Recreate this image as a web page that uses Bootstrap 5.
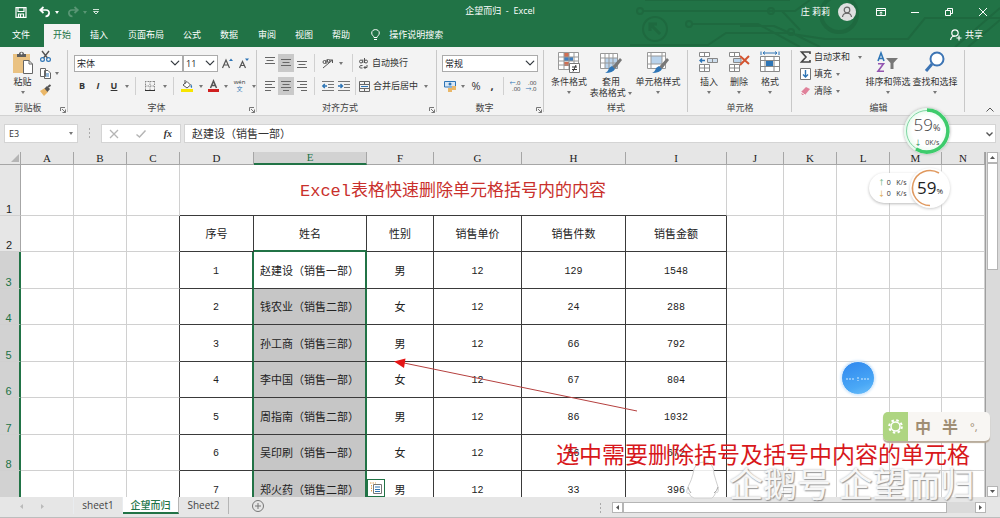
<!DOCTYPE html>
<html lang="zh-CN">
<head>
<meta charset="utf-8">
<meta name="viewport" content="width=device-width, initial-scale=1">
<title>企望而归 - Excel</title>
<link href="https://cdn.jsdelivr.net/npm/bootstrap@5.3.0/dist/css/bootstrap.min.css" rel="stylesheet">
<style>
  :root { --xl-green:#217346; --xl-ribbon:#f3f3f3; --xl-chrome:#e6e6e6; --xl-line:#d0d0d0; --ink:#333; }
  body { font-family:"Open Sans","Noto Sans CJK SC",sans-serif; font-size:9px; line-height:12px; color:var(--ink); background:var(--xl-chrome); }
  button, input, select { font:inherit; color:inherit; }
  svg { display:block; flex:none; overflow:visible; }
  .btn { --bs-btn-padding-x:0; --bs-btn-padding-y:0; --bs-btn-font-size:9px; --bs-btn-line-height:12px; --bs-btn-border-width:0; --bs-btn-border-radius:0; --bs-btn-color:#333; white-space:nowrap; }

  /* title bar and ribbon tabs */
  .app-head { background:var(--xl-green); color:#fff; }
  .app-head .btn { --bs-btn-color:#fff; }
  .circuit { position:absolute; right:0; top:0; overflow:hidden; }
  .title-bar { height:24px; padding-left:15px; }
  .doc-title { left:0; right:0; top:5px; }
  .tab-strip { height:23px; }
  .tab-strip .nav-link { color:#fff; font-size:9px; line-height:20px; padding:1px 9px 2px; border-radius:0; }
  .tab-strip .nav-link.active { background:var(--xl-ribbon); color:var(--xl-green); }

  /* ribbon */
  .ribbon { background:var(--xl-ribbon); height:69px; border-bottom:1px solid #d2d2d2; }
  .rgroup { flex:none; position:relative; padding-top:4px; }
  .rgroup::after { content:""; position:absolute; right:0; top:3px; bottom:3px; width:1px; background:#c8c8c8; }
  .rgroup-name { position:absolute; left:0; right:0; bottom:1px; text-align:center; color:#444; }
  .rgroup-more { position:absolute; right:2px; bottom:2px; }
  .trow { display:grid; align-items:center; justify-items:center; height:24px; }
  .trow + .trow { height:22px; }
  .caret { width:0; height:0; border:2px solid transparent; border-top:3px solid #777; border-bottom:0; }
  .vsep { width:1px; height:18px; background:#d0d0d0; }
  .pressed { background:#c9c9c9 !important; }
  .tool { width:16px; height:18px; display:flex; align-items:center; justify-content:center; }
  .form-select.xl { height:17px; padding:0 12px 0 2px; font-size:9px; line-height:15px; border:1px solid #ababab; border-radius:0; background-color:#fff; background-size:10px 10px; background-position:right 2px center; width:100%; }
  .big { display:flex; flex-direction:column; align-items:center; }
  .big span { margin-top:2px; line-height:11px; text-align:center; }
  .big .caret { margin-top:4px; }

  /* formula bar */
  .fbar { height:36px; padding:8px 4px 9px; }
  .fbox { background:#fff; border:1px solid #d4d4d4; height:19px; display:flex; align-items:center; }
  .fbox input { border:0; outline:0; background:transparent; min-width:0; width:100%; padding:0; }

  /* sheet */
  .sheet { flex:1 1 0; min-height:0; }
  .grid-wrap { overflow:hidden; background:#fff; min-width:0; border-right:1px solid #9f9f9f; }
  .cells { table-layout:fixed; width:100%; border-collapse:separate; border-spacing:0; font-family:"Liberation Mono","Noto Sans CJK SC",monospace; font-size:11px; line-height:12px; color:#222; }
  .cells td, .cells th { padding:0; border-right:1px solid var(--xl-line); border-bottom:1px solid var(--xl-line); text-align:center; vertical-align:middle; overflow:hidden; white-space:nowrap; font-weight:400; }
  .cells tbody td { padding-top:3px; }
  .cells thead th { height:13px; line-height:12px; font-family:"Liberation Serif",serif; font-weight:400; background:var(--xl-chrome); border-color:#a6a6a6; }
  .cells thead th.on { background:#d2d2d2; color:var(--xl-green); border-bottom:2px solid var(--xl-green); line-height:11px; }
  .cells tbody th { vertical-align:bottom; background:var(--xl-chrome); border-right-color:#a6a6a6; padding-right:2px; font-family:"Liberation Sans",sans-serif; font-size:11px; }
  .cells tbody tr:nth-child(even) { height:36px; }
  .cells tbody tr:nth-child(odd) { height:37px; }
  .cells tbody tr:first-child { height:51px; }
  .cells tbody tr.hit th { background:#d2d2d2; color:var(--xl-green); border-right:2px solid var(--xl-green); }
  .cells td.k { border-color:#3a3a3a; }
  .cells td.edge { border-right-color:#3a3a3a; }
  .cells td.num { font-size:10px; }
  .cells td.head-line { border-bottom-color:#3a3a3a; color:#c9302c; font-size:17px; line-height:22px; }
  .cells .hit td.pre, .cells .hit td.sel { border-right:2px solid var(--xl-green); }
  .cells td.sel { text-align:left; padding-left:6px; }
  .cells .hit ~ .hit td.sel { background:#c6c6c6; }
  .cells td.sel-top { border-bottom:2px solid var(--xl-green); }
  .vbar { width:14px; flex:none; background:#dadada; padding:0 2px 0 1px; display:flex; flex-direction:column; }
  .sbtn { background:#fff; border:1px solid #b5b5b5; display:flex; align-items:center; justify-content:center; height:11px; width:11px; flex:none; padding:0; }
  .thumb { background:#fff; border:1px solid #b5b5b5; }

  /* sheet tabs */
  .foot { height:21px; padding-bottom:3px; border-bottom:1px solid #bdbdbd; font-size:10px; }
  .foot .nav-link { font-size:10px; line-height:16px; padding:0; text-align:center; color:#444; border-radius:0; border-right:1px solid #b5b5b5; }
  .foot .nav-link.active { background:#fff; color:var(--xl-green); border-bottom:2px solid var(--xl-green); border-right-color:#b5b5b5; font-size:10px; font-weight:500; }

  /* floating things over the sheet */
  .float { position:absolute; z-index:5; }
  .note { left:556px; top:440px; font-size:23px; line-height:28px; color:#d8171b; white-space:nowrap; }
  .wmark { left:729px; top:461px; font-size:34px; line-height:44px; color:#f6f6f6; white-space:nowrap; text-shadow:1px 1px 1px #888, 0 0 2px #aaa; opacity:.85; z-index:4; font-family:"Noto Sans CJK SC",sans-serif; font-weight:400; }
  .ball { right:50px; top:108px; width:46px; height:46px; border-radius:50%; background:radial-gradient(circle,#fff 45%,#c3f2d2 100%); box-shadow:0 0 3px #aaa; color:#444; }
  .pill { right:58px; top:173px; width:73px; height:30px; border-radius:15px; background:#fff; box-shadow:0 1px 3px #bbb; padding:4px 0 0 9px; font-size:7px; line-height:11px; }
  .dial { right:50px; top:168px; width:40px; height:40px; border-radius:50%; background:#fff; box-shadow:0 1px 3px #ccc; color:#222; }
  .bubble { left:841px; top:361px; width:34px; height:34px; border-radius:50%; border:1px solid #d8ebfd; background:linear-gradient(160deg,#2f87ee,#4aa8f6 70%,#6fc0fa); box-shadow:0 0 3px #b5d8f8; }
  .ime { right:10px; top:412px; width:107px; height:29px; border-radius:5px; background:#f8f6f3; box-shadow:0 2px 1px #b8ac9c; overflow:hidden; color:#a08e74; font-size:16px; line-height:20px; font-weight:700; }
  .ime-logo { width:25px; background:#aed581; }
  .paste-opt { left:367px; top:479px; width:18px; height:18px; background:#fff; border:1px solid var(--xl-green); padding:2px; }
</style>
</head>
<body>
<div class="vh-100 d-flex flex-column position-relative overflow-hidden">

  <header class="app-head position-relative">
    <svg class="circuit" width="500" height="47" fill="none" stroke="#1e693f" stroke-width="2">
      <path d="M145 0H290M143 11H295L310 0M192 24H258L300 47M130 45H208L226 33H292L320 47M240 26H274L292 34L325 39H408L425 18H500M240 11H282L300 30M455 47L500 8M468 47L500 20"/>
      <circle cx="140" cy="11" r="3"/><circle cx="189" cy="24" r="3"/><circle cx="271" cy="11" r="3"/><circle cx="291" cy="32" r="3"/>
      <circle cx="155" cy="29" r="12"/><path d="M160 34L150 24M150 31V24H157" stroke-width="3"/>
      <circle cx="339" cy="14" r="18" stroke-width="4"/>
    </svg>
    <div class="title-bar d-flex align-items-center position-relative">
      <div class="d-flex align-items-center">
        <button class="btn" aria-label="保存"><svg width="12" height="11" fill="none" stroke="#fff" stroke-width="1.2"><path d="M1 .6H11V10.4H1ZM3 .6V4.5H9V.6M3.5 10.4V7H8.500V10.4M5.500 7.500V10"/></svg></button>
        <button class="btn d-flex align-items-center ms-2 ps-1" aria-label="撤消"><svg width="12" height="12" fill="none" stroke="#fff" stroke-width="1.700"><path d="M4.500 1L1.200 4L4.500 7M1.500 4H7C11.500 4 11 10 6.500 10.500"/></svg><i class="caret ms-1" style="border-top-color:#fff"></i></button>
        <button class="btn d-flex align-items-center ms-2 opacity-25" aria-label="恢复"><svg width="12" height="12" fill="none" stroke="#fff" stroke-width="1.700"><path d="M7.500 1L10.800 4L7.500 7M10.500 4H5C.500 4 1 10 5.500 10.500"/></svg><i class="caret ms-1" style="border-top-color:#fff"></i></button>
        <button class="btn ps-1" style="margin-left:2px" aria-label="自定义快速访问工具栏"><svg width="6" height="6" fill="none" stroke="#cfe3d7"><path d="M0 .5H6M.5 2.500H5.500L3 5Z"/></svg></button>
      </div>
      <div class="doc-title position-absolute text-center">企望而归&nbsp; - &nbsp;Excel</div>
      <div class="ms-auto d-flex align-items-center position-relative">
        <span>庄 莉莉</span>
        <svg class="ms-2" width="18" height="18"><circle cx="9" cy="9" r="9" fill="#dfe0e0"/><g fill="none" stroke="#666" stroke-width="1.200"><circle cx="9" cy="7" r="2.800"/><path d="M4.500 14C5 9 13 9 13.500 14"/></g></svg>
        <button class="btn" style="margin-left:20px" aria-label="功能区显示选项"><svg width="10" height="8" fill="none" stroke="#fff"><path d="M.5 .5H9.500V7.500H.5ZM.5 2.500H9.500M5 7V4M3.500 5.300L5 3.800L6.500 5.300"/></svg></button>
        <button class="btn" style="margin-left:25px" aria-label="最小化"><svg width="8" height="8" stroke="#fff"><path d="M0 4.500H8"/></svg></button>
        <button class="btn" style="margin-left:26px" aria-label="向下还原"><svg width="8" height="8" fill="none" stroke="#fff"><path d="M.5 2.500H5.500V7.500H.5ZM2.500 2.500V.5H7.500V5.500H5.500"/></svg></button>
        <button class="btn" style="margin:0 13px 0 26px" aria-label="关闭"><svg width="8" height="8" stroke="#fff"><path d="M0 0L8 8M8 0L0 8"/></svg></button>
      </div>
    </div>
    <nav class="tab-strip d-flex position-relative">
      <div class="nav flex-nowrap">
        <a class="nav-link" style="width:44px;padding-left:12px" href="#">文件</a>
        <a class="nav-link active" href="#">开始</a>
        <a class="nav-link" style="padding-left:10px" href="#">插入</a>
        <a class="nav-link ms-1" style="padding-left:7px" href="#">页面布局</a>
        <a class="nav-link ms-1" style="padding-left:6px" href="#">公式</a>
        <a class="nav-link ms-1" style="padding-left:6px" href="#">数据</a>
        <a class="nav-link ms-1" style="padding-left:7px" href="#">审阅</a>
        <a class="nav-link ms-1" style="padding-left:6px" href="#">视图</a>
        <a class="nav-link ms-1" style="padding-left:6px" href="#">帮助</a>
        <a class="nav-link d-flex align-items-center" style="padding-left:12px" href="#"><svg width="9" height="12" fill="none" stroke="#fff"><path d="M3 8.500C3 7 .7 6.500 .7 4C.7 -.5 8.300 -.5 8.300 4C8.300 6.500 6 7 6 8.500ZM3 10.500H6"/></svg><span style="margin-left:9px">操作说明搜索</span></a>
      </div>
      <a class="nav-link d-flex align-items-center ms-auto" style="padding-right:17px" href="#"><svg width="11" height="12" fill="none" stroke="#fff" stroke-width="1.200"><circle cx="5" cy="4" r="3.200"/><path d="M.6 11C1 8 3 7 5 7M9 6.500V11.500M6.500 9H11.500"/></svg><span class="ms-1">共享</span></a>
    </nav>
  </header>

  <section class="ribbon d-flex" aria-label="功能区">
    <div class="rgroup" style="width:68px">
      <div class="d-flex">
        <button class="btn big" style="margin-left:12px;width:21px">
          <svg width="22" height="23"><path d="M1 3H18V22H1Z" fill="#eac282"/><path d="M5 6V3H7C7 0 12 0 12 3H14V6Z" fill="#5d5d5d"/><circle cx="9.500" cy="2.500" r="1" fill="#fff"/><path d="M11.500 9.500H17L20.500 13V22.500H11.500Z" fill="#fff" stroke="#666"/><path d="M17 9.500V13H20.500" fill="none" stroke="#666"/></svg>
          <span style="margin-top:2px">粘贴</span><i class="caret"></i></button>
        <div class="d-flex flex-column" style="margin-left:7px;gap:6px">
          <button class="btn" aria-label="剪切"><svg width="11" height="11" fill="none" stroke="#555" stroke-width="1.400"><path d="M2 0L7.500 7M9 0L3.500 7"/><g stroke="#2e75b6" stroke-width="1.200"><circle cx="2.500" cy="8.500" r="1.900"/><circle cx="8.500" cy="8.500" r="1.900"/></g></svg></button>
          <button class="btn d-flex align-items-center" aria-label="复制"><svg width="11" height="11" fill="#fff" stroke="#666"><path d="M.5 .5H5.500V8.500H.5ZM4.500 2.500H8L10.500 5V10.500H4.500Z"/><path d="M6 6H9M6 8H9" stroke="#2e75b6"/></svg><i class="caret ms-1"></i></button>
          <button class="btn" aria-label="格式刷"><svg width="11" height="11"><path d="M0 6L5 3L8 7L4 11Z" fill="#eab768"/><path d="M4.500 3.500L7 1L10 4L7.500 7Z" fill="#555"/><path d="M8 2L10.500 0" stroke="#555" stroke-width="2"/></svg></button>
        </div>
      </div>
      <div class="rgroup-name" style="right:12px">剪贴板</div><svg class="rgroup-more" width="6" height="6" fill="none" stroke="#777"><path d="M.5 4V.5H5M2 2L5.500 5.500M5.500 2.500V5.500H2.500"/></svg>
    </div>

    <div class="rgroup" style="width:189px">
      <div class="trow" style="grid-template-columns:109px 35px 18px 16px;padding-left:6px">
        <select class="form-select xl" aria-label="字体"><option>宋体</option></select>
        <select class="form-select xl" aria-label="字号"><option>11</option></select>
        <button class="btn" aria-label="增大字号"><svg width="11" height="11" fill="none" stroke="#555" stroke-width="1.200"><path d="M.5 10L4 2L7.500 10M2 7H6"/><path d="M7 3L9 .500L11 3Z" fill="#2e75b6" stroke="none"/></svg></button>
        <button class="btn" aria-label="减小字号"><svg width="10" height="11" fill="none" stroke="#555" stroke-width="1.200"><path d="M.5 10L3.500 3.500L6.500 10M2 7.500H5"/><path d="M6 .500L8 3L10 .500Z" fill="#2e75b6" stroke="none"/></svg></button>
      </div>
      <div class="trow" style="grid-template-columns:16px 16px 16px 9px 9px 20px 9px 8px 19px 9px 16px 9px 19px 9px;padding-left:6px">
        <button class="btn fw-bold">B</button><button class="btn fst-italic fw-bold">I</button><button class="btn text-decoration-underline fw-bold">U</button><i class="caret"></i><i class="vsep"></i>
        <button class="btn" aria-label="边框"><svg width="10" height="10" fill="none" stroke="#888"><path d="M.5 0V10M5 0V10M9.500 0V10M0 .5H10M0 5H10" stroke-dasharray="1.500 1"/><path d="M0 9.500H10" stroke="#333"/></svg></button><i class="caret"></i><i class="vsep"></i>
        <button class="btn" aria-label="填充颜色"><svg width="12" height="12"><path d="M2 5L6 1.500L9.500 5L6 8Z" fill="#fff" stroke="#555"/><path d="M4 4V0" stroke="#555"/><path d="M10 4Q12 7 10.500 8Q9 7 10 4" fill="#2e75b6"/><path d="M0 9H12V12H0Z" fill="#f7e500"/></svg></button><i class="caret"></i>
        <button class="btn" aria-label="字体颜色"><svg width="11" height="12"><path d="M2.500 8L5.500 1L8.500 8M3.500 5.500H7.500" fill="none" stroke="#555" stroke-width="1.500"/><path d="M0 9H11V12H0Z" fill="#d01f1f"/></svg></button><i class="caret"></i>
        <button class="btn d-flex flex-column align-items-center" style="font-size:6px;line-height:7px"><span>wén</span><span style="color:#2e75b6">文</span></button><i class="caret"></i>
      </div>
      <div class="rgroup-name" style="right:12px">字体</div><svg class="rgroup-more" width="6" height="6" fill="none" stroke="#777"><path d="M.5 4V.5H5M2 2L5.500 5.500M5.500 2.500V5.500H2.500"/></svg>
    </div>

    <div class="rgroup" style="width:180px">
      <div class="trow" style="grid-template-columns:16px 16px 16px 9px 17px 9px 14px auto;padding-left:5px">
        <button class="btn tool" aria-label="顶端对齐"><svg width="10" height="10" stroke="#666"><path d="M0 1.500H10M1.500 4.500H8.500M0 7.500H10" transform="translate(0 -2)"/></svg></button>
        <button class="btn tool pressed" aria-label="垂直居中"><svg width="10" height="10" stroke="#666"><path d="M0 1.500H10M1.500 4.500H8.500M0 7.500H10"/></svg></button>
        <button class="btn tool" aria-label="底端对齐"><svg width="10" height="10" stroke="#666"><path d="M0 3.500H10M1.500 6.500H8.500M0 9.500H10"/></svg></button>
        <i class="vsep"></i>
        <button class="btn" aria-label="方向"><svg width="11" height="11" fill="none" stroke="#555"><path d="M1 10L10.500 2M10.500 5V2H7.500"/><circle cx="2.500" cy="4" r="1.500"/><path d="M4 2V6M5 1L6 4"/><circle cx="6.500" cy="3" r="1.500"/></svg></button><i class="caret"></i><i class="vsep"></i>
        <button class="btn d-flex align-items-center" style="justify-self:start"><svg width="9" height="11" fill="none" stroke="#555"><circle cx="2" cy="3.500" r="1.500"/><path d="M3.800 1.500V5M5.500 0V5"/><circle cx="7" cy="3.500" r="1.500"/><path d="M3.500 7.500Q.5 7 .5 9Q.5 10.500 3.500 10M8 7V9.500H5M6.500 8L5 9.500L6.500 11"/></svg><span class="ms-1">自动换行</span></button>
      </div>
      <div class="trow" style="grid-template-columns:16px 16px 16px 9px 17px 15px 8px auto 16px 9px;justify-content:start;padding-left:5px">
        <button class="btn tool" aria-label="左对齐"><svg width="10" height="10" stroke="#666"><path d="M0 .5H10M0 3.500H7M0 6.500H10M0 9.500H6"/></svg></button>
        <button class="btn tool pressed" aria-label="居中"><svg width="10" height="10" stroke="#666"><path d="M0 .5H10M1.500 3.500H8.500M0 6.500H10M2 9.500H8"/></svg></button>
        <button class="btn tool" aria-label="右对齐"><svg width="10" height="10" stroke="#666"><path d="M0 .5H10M3 3.500H10M0 6.500H10M4 9.500H10"/></svg></button>
        <i class="vsep"></i>
        <button class="btn" aria-label="减少缩进"><svg width="12" height="10" fill="none" stroke="#777"><path d="M0 .5H12M6 3.500H12M6 6.500H12M0 9.500H12"/><path d="M5 5H1M2.800 3L.8 5L2.800 7" stroke="#2e75b6" stroke-width="1.400"/></svg></button>
        <button class="btn" aria-label="增加缩进"><svg width="12" height="10" fill="none" stroke="#777"><path d="M0 .5H12M6 3.500H12M6 6.500H12M0 9.500H12"/><path d="M0 5H4M2.500 3L4.500 5L2.500 7" stroke="#2e75b6" stroke-width="1.400"/></svg></button>
        <i class="vsep"></i>
        <button class="btn d-flex align-items-center"><svg width="11" height="11" fill="none" stroke="#666"><path d="M.5 .5H10.500V10.500H.5ZM.5 3.500H10.500M.5 7.500H10.500M5.500 .5V3.500M5.500 7.500V10.500"/><path d="M2 5.500H9" stroke="#2e75b6"/></svg><span style="margin-left:3px">合并后居中</span></button>
        <i class="caret"></i>
      </div>
      <div class="rgroup-name" style="right:14px">对齐方式</div><svg class="rgroup-more" width="6" height="6" fill="none" stroke="#777"><path d="M.5 4V.5H5M2 2L5.500 5.500M5.500 2.500V5.500H2.500"/></svg>
    </div>

    <div class="rgroup" style="width:107px">
      <div class="trow" style="grid-template-columns:96px;padding-left:5px"><select class="form-select xl" aria-label="数字格式"><option>常规</option></select></div>
      <div class="trow" style="grid-template-columns:18px 8px 18px 14px 8px 16px 16px;padding-left:4px">
        <button class="btn" aria-label="会计数字格式"><svg width="12" height="11"><path d="M.5 .5H11.500V6H.5Z" fill="#d7e6f5" stroke="#2e75b6"/><circle cx="6" cy="3" r="1.500" fill="#2e75b6"/><path d="M4 7H8V11H4ZM8 5H12V9H8Z" fill="#eab768"/></svg></button><i class="caret"></i>
        <button class="btn" style="font-size:11px">%</button><button class="btn fw-bold" style="font-size:11px">,</button><i class="vsep"></i>
        <button class="btn text-end" style="font-size:6px;line-height:6px"><span style="color:#2e75b6">←</span>.0<br>.00</button>
        <button class="btn text-end" style="font-size:6px;line-height:6px">.00<br><span style="color:#2e75b6">→</span>.0</button>
      </div>
      <div class="rgroup-name" style="right:12px">数字</div><svg class="rgroup-more" width="6" height="6" fill="none" stroke="#777"><path d="M.5 4V.5H5M2 2L5.500 5.500M5.500 2.500V5.500H2.500"/></svg>
    </div>

    <div class="rgroup" style="width:144px">
      <div class="d-grid align-items-start" style="grid-template-columns:38px 44px 48px;padding-left:6px;column-gap:1px">
        <button class="btn big"><svg width="22" height="23"><path d="M.5 1.500H20.500V18.500H.5Z" fill="#fff"/><path d="M6 1H11V6H6ZM6 11H11V15H6Z" fill="#d26f52"/><path d="M6 6H15V10H6Z" fill="#3f7fbf"/><path d="M.5 1.500H20.500V18.500H.5ZM.5 6H20M.5 10H20M.5 14H20M6 1V18M11 1V18M16 1V18" fill="none" stroke="#999"/><path d="M11.500 12.500H21.500V21.500H11.500Z" fill="#fff" stroke="#777"/><path d="M14 16H19M14 18.500H19M18 14L15 20.500" stroke="#333"/></svg><span>条件格式</span><i class="caret"></i></button>
        <button class="btn big"><svg width="22" height="23"><path d="M.5 2.500H17.500V17.500H.5Z" fill="#fff"/><path d="M5 7H18V18H5Z" fill="#b9d3ec"/><path d="M.5 2.500H17.500V17.500H.5ZM.5 7H18M.5 12H18M5 2V18M9 2V18M13 2V18" fill="none" stroke="#999"/><path d="M12 16L20 7L22 9L15 18Z" fill="#777"/><path d="M5 22Q8 21 9 17L12 15L15 18Q13 22 5 22" fill="#2e75b6"/></svg><span>套用<br>表格格式 <i class="caret d-inline-block m-0 align-middle"></i></span></button>
        <button class="btn big"><svg width="22" height="23"><path d="M.5 1.500H18.500V17.500H.5Z" fill="#fff"/><path d="M4 5H15V13H4Z" fill="#b9d3ec"/><path d="M.5 1.500H18.500V17.500H.5ZM.5 5H19M.5 13H19M4 1V18M15 1V18" fill="none" stroke="#999"/><path d="M12 16L20 7L22 9L15 18Z" fill="#777"/><path d="M5 22Q8 21 9 17L12 15L15 18Q13 22 5 22" fill="#2e75b6"/></svg><span>单元格样式</span><i class="caret"></i></button>
      </div>
      <div class="rgroup-name">样式</div>
    </div>

    <div class="rgroup" style="width:104px">
      <div class="d-grid" style="grid-template-columns:30px 30px 32px;padding-left:6px">
        <button class="btn big"><svg width="20" height="23" fill="#fff" stroke="#888"><path d="M.5 1.500H10.500V5.500H.5ZM5.500 1.500V5.500M.5 13.500H10.500V20.500H.5ZM5.500 13.500V20.500M.5 17H10.500"/><path d="M8.500 7.500H18.500V11.500H8.500ZM13.500 7.500V11.500" fill="#cfdfee"/><path d="M6 9.500H1M3 7.500L1 9.500L3 11.500" fill="none" stroke="#2e75b6" stroke-width="1.400"/></svg><span>插入</span><i class="caret"></i></button>
        <button class="btn big"><svg width="20" height="23" fill="#fff" stroke="#888"><path d="M.5 1.500H10.500V5.500H.5ZM5.500 1.500V5.500M.5 13.500H10.500V20.500H.5ZM5.500 13.500V20.500M.5 17H10.500"/><path d="M4.500 7.500H12V11.500H4.500Z" fill="#b9d3ec"/><path d="M11 5L20 13M20 5L11 14" fill="none" stroke="#d35430" stroke-width="2"/></svg><span>删除</span><i class="caret"></i></button>
        <button class="btn big"><svg width="20" height="23" fill="none" stroke="#888"><path d="M.5 5.500H19.500V20.500H.5ZM5 5V21M14 5V21M.5 9.500H20M.5 15.500H20" fill="#fff"/><path d="M6 10H13V15H6Z" fill="#2e75b6" stroke="none"/><path d="M1 .5V4M19 .5V4M3 2H17M5 .5L3 2L5 3.500M15 .5L17 2L15 3.500" stroke="#2e75b6"/></svg><span>格式</span><i class="caret"></i></button>
      </div>
      <div class="rgroup-name">单元格</div>
    </div>

    <div class="rgroup" style="width:173px">
      <div class="d-flex">
        <div class="d-flex flex-column" style="gap:5px;width:73px;padding-left:8px">
          <button class="btn d-flex align-items-center"><svg width="11" height="12" fill="none" stroke="#444" stroke-width="1.600"><path d="M10 3V1H1.500L6 6L1.500 11H10V9"/></svg><span style="margin-left:3px">自动求和</span><i class="caret ms-2"></i></button>
          <button class="btn d-flex align-items-center"><svg width="11" height="12" fill="#fff" stroke="#777"><path d="M.5 .5H10.500V11.500H.5Z"/><path d="M5.500 2V9M3 6.500L5.500 9L8 6.500" fill="none" stroke="#2e75b6" stroke-width="1.400"/></svg><span style="margin-left:3px">填充</span><i class="caret ms-1"></i></button>
          <button class="btn d-flex align-items-center"><svg width="11" height="10"><path d="M1 6L6 1L10 3L5 9L2 9Z" fill="#e0819a"/><path d="M1 6L5 9" stroke="#fff"/></svg><span style="margin-left:3px">清除</span><i class="caret ms-1"></i></button>
        </div>
        <button class="btn big" style="width:46px"><svg width="22" height="23" fill="none" stroke-width="1.600"><path d="M1 10L4 2L7 10M2 7.500H6" stroke="#2e75b6"/><path d="M1 12.800H6.500L1 20.200H7" stroke="#9355b0"/><path d="M9 7H21L16.500 12V18H13.500V12Z" fill="#777"/></svg><span>排序和筛选</span><i class="caret"></i></button>
        <button class="btn big" style="width:48px"><svg width="22" height="23" fill="none" stroke="#3c74b4"><circle cx="13" cy="8" r="6.500" fill="#fff" stroke-width="2"/><path d="M8 13L2 20" stroke-width="3"/></svg><span>查找和选择</span><i class="caret"></i></button>
      </div>
      <div class="rgroup-name">编辑</div>
    </div>
    <button class="btn ms-auto align-self-end" style="margin:0 6px 3px" aria-label="折叠功能区"><svg width="8" height="5" fill="none" stroke="#555"><path d="M.5 4.500L4 1L7.500 4.500"/></svg></button>
  </section>

  <div class="fbar d-flex">
    <div class="fbox ps-1 pe-1" style="width:74px"><input aria-label="名称框" value="E3"><i class="caret flex-shrink-0"></i></div>
    <svg width="23" height="19" fill="#aaa"><path d="M11 4H12V6H11ZM11 8H12V10H11ZM11 12H12V14H11Z"/></svg>
    <div class="fbox justify-content-between" style="width:80px;padding:0 8px">
      <svg width="8" height="8" stroke="#b5b5b5" stroke-width="1.300"><path d="M0 0L8 8M8 0L0 8"/></svg>
      <svg width="10" height="8" fill="none" stroke="#b5b5b5" stroke-width="1.500"><path d="M.5 4.500L3.500 7L9.500 .5"/></svg>
      <button class="btn fst-italic fw-bold" style="font-family:'Liberation Serif',serif;font-size:10px" aria-label="插入函数">fx</button>
    </div>
    <div class="fbox flex-grow-1" style="margin-left:3px;padding:0 2px 0 7px"><input style="font-size:11px" aria-label="编辑栏" value="赵建设（销售一部）"><svg width="7" height="4" fill="none" stroke="#555" stroke-width="1.400"><path d="M.5 .5L3.500 3.500L6.500 .5"/></svg></div>
  </div>

  <main class="sheet d-flex">
    <div class="grid-wrap flex-grow-1">
      <table class="cells">
        <colgroup><col style="width:21px"><col style="width:53px"><col style="width:53px"><col style="width:53px"><col style="width:74px"><col style="width:113px"><col style="width:67px"><col style="width:88px"><col style="width:104px"><col style="width:101px"><col style="width:57px"><col style="width:53px"><col style="width:53px"><col style="width:52px"><col></colgroup>
        <thead><tr><th aria-label="全选"><svg class="ms-auto" width="9" height="9"><path d="M8 0V8H0Z" fill="#b5b5b5"/></svg></th><th>A</th><th>B</th><th>C</th><th>D</th><th class="on">E</th><th>F</th><th>G</th><th>H</th><th>I</th><th>J</th><th>K</th><th>L</th><th>M</th><th>N</th></tr></thead>
        <tbody>
          <tr><th>1</th><td></td><td></td><td></td><td class="head-line" colspan="6">Excel表格快速删除单元格括号内的内容</td><td></td><td></td><td></td><td></td><td></td></tr>
          <tr><th>2</th><td></td><td></td><td class="edge"></td><td class="k">序号</td><td class="k sel-top">姓名</td><td class="k">性别</td><td class="k">销售单价</td><td class="k">销售件数</td><td class="k">销售金额</td><td></td><td></td><td></td><td></td><td></td></tr>
          <tr class="hit"><th>3</th><td></td><td></td><td class="edge"></td><td class="k num pre">1</td><td class="k sel">赵建设（销售一部）</td><td class="k">男</td><td class="k num">12</td><td class="k num">129</td><td class="k num">1548</td><td></td><td></td><td></td><td></td><td></td></tr>
          <tr class="hit"><th>4</th><td></td><td></td><td class="edge"></td><td class="k num pre">2</td><td class="k sel">钱农业（销售二部）</td><td class="k">女</td><td class="k num">12</td><td class="k num">24</td><td class="k num">288</td><td></td><td></td><td></td><td></td><td></td></tr>
          <tr class="hit"><th>5</th><td></td><td></td><td class="edge"></td><td class="k num pre">3</td><td class="k sel">孙工商（销售三部）</td><td class="k">男</td><td class="k num">12</td><td class="k num">66</td><td class="k num">792</td><td></td><td></td><td></td><td></td><td></td></tr>
          <tr class="hit"><th>6</th><td></td><td></td><td class="edge"></td><td class="k num pre">4</td><td class="k sel">李中国（销售一部）</td><td class="k">女</td><td class="k num">12</td><td class="k num">67</td><td class="k num">804</td><td></td><td></td><td></td><td></td><td></td></tr>
          <tr class="hit"><th>7</th><td></td><td></td><td class="edge"></td><td class="k num pre">5</td><td class="k sel">周指南（销售二部）</td><td class="k">男</td><td class="k num">12</td><td class="k num">86</td><td class="k num">1032</td><td></td><td></td><td></td><td></td><td></td></tr>
          <tr class="hit"><th>8</th><td></td><td></td><td class="edge"></td><td class="k num pre">6</td><td class="k sel">吴印刷（销售一部）</td><td class="k">女</td><td class="k num">12</td><td class="k num">56</td><td class="k num">672</td><td></td><td></td><td></td><td></td><td></td></tr>
          <tr class="hit"><th></th><td></td><td></td><td class="edge"></td><td class="k num pre">7</td><td class="k sel">郑火药（销售二部）</td><td class="k">男</td><td class="k num">12</td><td class="k num">33</td><td class="k num">396</td><td></td><td></td><td></td><td></td><td></td></tr>
        </tbody>
      </table>
    </div>
    <div class="vbar"><button class="sbtn" aria-label="向上滚动"><svg width="5" height="3"><path d="M0 3L2.500 0L5 3Z" fill="#555"/></svg></button><div class="thumb" style="height:107px;width:11px"></div><button class="sbtn mt-auto" aria-label="向下滚动"><svg width="5" height="3"><path d="M0 0L2.500 3L5 0Z" fill="#555"/></svg></button></div>
  </main>

  <footer class="foot d-flex">
    <svg width="73" height="17" fill="#bbb"><path d="M23 7V12L20 9.500ZM41 7V12L44 9.500Z"/></svg>
    <nav class="nav flex-nowrap">
      <a class="nav-link border-start border-secondary-subtle" style="width:50px" href="#">sheet1</a><a class="nav-link active" style="width:56px" href="#">企望而归</a><a class="nav-link" style="width:50px" href="#">Sheet2</a>
    </nav>
    <button class="btn" style="margin-left:23px" aria-label="新工作表"><svg width="12" height="12" fill="none" stroke="#777"><circle cx="6" cy="6" r="5.500"/><path d="M6 3V9M3 6H9"/></svg></button>
    <div class="ms-auto d-flex align-items-center pt-1" style="width:400px;padding-right:14px">
      <svg width="12" height="11" fill="#aaa"><path d="M0 1H1V3H0ZM0 5H1V7H0ZM0 9H1V11H0Z"/></svg>
      <button class="sbtn" aria-label="向左滚动"><svg width="3" height="5"><path d="M3 0L0 2.500L3 5Z" fill="#555"/></svg></button>
      <div class="thumb" style="width:324px;height:11px"></div><div class="flex-grow-1" style="height:11px;background:#dadada"></div>
      <button class="sbtn" aria-label="向右滚动"><svg width="3" height="5"><path d="M0 0L3 2.500L0 5Z" fill="#555"/></svg></button>
    </div>
  </footer>

  <svg class="float" style="left:390px;top:355px" width="250" height="60"><path d="M247 56L14 8" stroke="#b5403f"/><path d="M4 6.500L15.500 3.500L14 13Z" fill="#e51515"/></svg>
  <div class="float note">选中需要删除括号及括号中内容的单元格</div>
  <svg class="float" style="left:686px;top:461px;z-index:4" width="34" height="38"><path d="M3 32Q-1 34 2 26Q6 18 7 13Q8 1 18 1Q28 1 28 13Q30 20 32 26Q33 33 30 31Q28 36 26 37H8Q4 36 3 32" fill="#fff" fill-opacity=".9" stroke="#d0d0d0"/><path d="M2 26Q3 30 5 32M32 26Q31 30 28 32" fill="none" stroke="#aaa"/></svg>
  <div class="float wmark">企鹅号 企望而归</div>
  <button class="float paste-opt" aria-label="快速分析"><svg width="12" height="12" fill="#fff" stroke="#777"><path d="M3.500 2.500H11.500V11.500H3.500Z"/><path d="M5 5H10M5 7.500H10M5 9.500H10" stroke="#2e75b6"/><path d="M0 1H6M1.500 3V10" stroke="#e0a050" stroke-dasharray="1.500 1"/></svg></button>

  <div class="float ball">
    <svg class="position-absolute" width="46" height="46" fill="none"><circle cx="23" cy="23" r="20.500" stroke="#7fd6a3"/><path d="M23 2A21 21 0 1 1 12 41" stroke="#3ecb6c" stroke-width="3.500"/></svg>
    <div class="position-relative text-center" style="font-size:17px;line-height:18px;padding-top:8px;font-weight:300">59<small style="font-size:9px;font-weight:400">%</small></div>
    <div class="position-relative text-center" style="font-size:7px;line-height:12px"><span class="text-success">↓</span>&nbsp; 0K/s</div>
  </div>
  <div class="float pill"><span style="color:#4aa76a">↑</span> 0 &nbsp; K/s<br><span style="color:#d9a441">↓</span> 0 &nbsp; K/s</div>
  <div class="float dial">
    <svg class="position-absolute" width="40" height="40" fill="none"><path d="M29 5A17.500 17.500 0 1 0 20 37.500" stroke="#e0995f" stroke-width="1.500"/></svg>
    <div class="position-relative text-center" style="font-size:17px;line-height:40px">59<small style="font-size:8px">%</small></div>
  </div>
  <div class="float bubble"><svg width="32" height="32" stroke="#d5ecff"><path d="M4 17H13M19 17H28M16 15V19" stroke-dasharray="2 1"/></svg></div>
  <div class="float ime d-flex align-items-center">
    <div class="ime-logo h-100 d-flex align-items-center justify-content-center"><svg width="15" height="15" fill="none" stroke="#fff"><circle cx="7.500" cy="7.500" r="4.500" stroke-width="1.500"/><circle cx="7.500" cy="7.500" r="6.300" stroke-width="2" stroke-dasharray="2.500 2.450"/></svg></div>
    <span style="margin-left:7px">中</span><span style="margin-left:11px">半</span><span class="fw-normal" style="margin-left:12px;font-size:11px">°,</span>
  </div>
</div>
<script src="https://cdn.jsdelivr.net/npm/bootstrap@5.3.0/dist/js/bootstrap.bundle.min.js"></script>
</body>
</html>
